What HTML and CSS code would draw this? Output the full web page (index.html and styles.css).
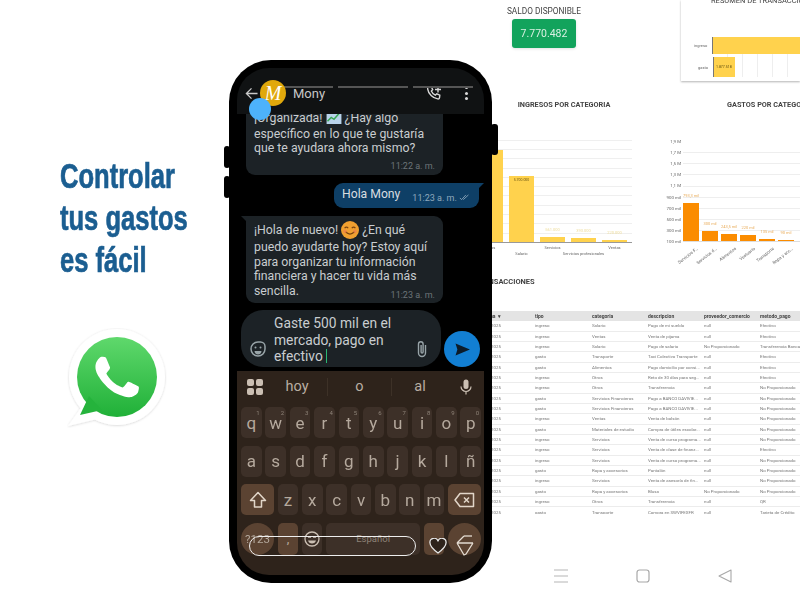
FILE: index.html
```html
<!DOCTYPE html>
<html lang="es">
<head>
<meta charset="utf-8">
<title>Controlar tus gastos</title>
<link rel="stylesheet" href="styles.css">
</head>
<body>
<main class="stage">
  <section class="pitch">
    <h1 class="headline">Controlar<br>tus gastos<br>es fácil</h1>
    <svg class="wa" viewBox="0 0 100 100" aria-label="WhatsApp">
      <defs>
        <linearGradient id="wag" x1="0" y1="0" x2="0" y2="1"><stop offset="0" stop-color="#5fd86c"/><stop offset="1" stop-color="#20b038"/></linearGradient>
        <filter id="was" x="-10%" y="-10%" width="120%" height="120%"><feDropShadow dx="0" dy="0.5" stdDeviation="1" flood-color="#000" flood-opacity=".18"/></filter>
      </defs>
      <g filter="url(#was)"><circle cx="50" cy="49" r="48" fill="#fff"/><path d="M18 74 L1 98 L30 91 Z" fill="#fff"/></g>
      <circle cx="50" cy="49" r="40" fill="url(#wag)"/>
      <path d="M22 68 L13 87 L35 82 Z" fill="#25b33c"/>
      <path transform="translate(6.8 5.8) scale(3.6)" fill="#fff" d="M17.472 14.382c-.297-.149-1.758-.867-2.03-.967-.273-.099-.471-.148-.67.15-.197.297-.767.966-.94 1.164-.173.199-.347.223-.644.075-.297-.15-1.255-.463-2.39-1.475-.883-.788-1.48-1.761-1.653-2.059-.173-.297-.018-.458.13-.606.134-.133.298-.347.446-.52.149-.174.198-.298.298-.497.099-.198.05-.371-.025-.52-.075-.149-.669-1.612-.916-2.207-.242-.579-.487-.5-.669-.51-.173-.008-.371-.01-.57-.01-.198 0-.52.074-.792.372-.272.297-1.04 1.016-1.04 2.479 0 1.462 1.065 2.875 1.213 3.074.149.198 2.096 3.2 5.077 4.487.709.306 1.262.489 1.694.625.712.227 1.36.195 1.871.118.571-.085 1.758-.719 2.006-1.413.248-.694.248-1.289.173-1.413-.074-.124-.272-.198-.57-.347z"/>
    </svg>
  </section>

  <section class="dash">
    <div class="dash-top">
      <div class="saldo">
        <div class="saldo-title">SALDO DISPONIBLE</div>
        <div class="saldo-box">7.770.482</div>
      </div>
      <div class="resumen">
        <div class="resumen-title">RESUMEN DE TRANSACCIONES</div>
        <div class="hbars">
          <div class="hrow"><span class="hlabel">ingreso</span><span class="hbar hbar-in"></span></div>
          <div class="hrow"><span class="hlabel">gasto</span><span class="hbar hbar-out">1.877.518</span></div>
        </div>
      </div>
    </div>

    <div class="dash-charts">
      <div class="chart chart-in">
        <h2 class="chart-title">INGRESOS POR CATEGORIA</h2>
        <div class="plot plot-in">
          <div class="col"><span class="bar bar-y" style="height:92px"></span></div>
          <div class="col"><span class="bar bar-y" style="height:66px"><span class="inlabel">5.700.000</span></span></div>
          <div class="col"><span class="val">561.000</span><span class="bar bar-y" style="height:5px"></span></div>
          <div class="col"><span class="val">393.000</span><span class="bar bar-y" style="height:4px"></span></div>
          <div class="col"><span class="val">220.000</span><span class="bar bar-y" style="height:2px"></span></div>
        </div>
        <div class="xlabels">
          <span class="xl">Otros</span><span class="xl low">Salario</span><span class="xl">Servicios</span><span class="xl low">Servicios profesionales</span><span class="xl">Ventas</span>
        </div>
      </div>
      <div class="chart chart-out">
        <h2 class="chart-title">GASTOS POR CATEGORIA</h2>
        <div class="plot-wrap">
          <div class="yaxis"><span>1,9 M</span><span>1,7 M</span><span>1,5 M</span><span>1,3 M</span><span>1,1 M</span><span>900 mil</span><span>700 mil</span><span>500 mil</span><span>300 mil</span><span>100 mil</span></div>
          <div class="plot plot-out">
            <div class="col"><span class="val val-o">793,3 mil</span><span class="bar bar-o" style="height:38px"></span></div>
            <div class="col"><span class="val val-o">300 mil</span><span class="bar bar-o" style="height:10px"></span></div>
            <div class="col"><span class="val val-o">243,5 mil</span><span class="bar bar-o" style="height:7px"></span></div>
            <div class="col"><span class="val val-o">220 mil</span><span class="bar bar-o" style="height:6px"></span></div>
            <div class="col"><span class="val val-o">135 mil</span><span class="bar bar-o" style="height:2px"></span></div>
            <div class="col"><span class="val val-o">90 mil</span><span class="bar bar-o" style="height:1px"></span></div>
          </div>
        </div>
        <div class="rlabels"><span>Servicios F...</span><span>Servicios d...</span><span>Alimentos</span><span>Vestuario</span><span>Transporte</span><span>Ropa y acc...</span><span>Salud</span></div>
      </div>
    </div>

    <h2 class="table-title">TRANSACCIONES</h2>
    <div class="table">
      <div class="row head"><span>fecha &nbsp;▾</span><span>tipo</span><span>categoria</span><span>descripcion</span><span>proveedor_comercio</span><span>metodo_pago</span></div>
      <div class="row"><span>01/01/2025</span><span>ingreso</span><span>Salario</span><span>Pago de mi sueldo</span><span>null</span><span>Efectivo</span></div>
      <div class="row"><span>02/01/2025</span><span>ingreso</span><span>Ventas</span><span>Venta de pijama</span><span>null</span><span>Efectivo</span></div>
      <div class="row"><span>03/01/2025</span><span>ingreso</span><span>Salario</span><span>Pago de salario</span><span>No Proporcionado</span><span>Transferencia Banca</span></div>
      <div class="row"><span>04/01/2025</span><span>gasto</span><span>Transporte</span><span>Taxi Colectivo Transporte</span><span>null</span><span>Efectivo</span></div>
      <div class="row"><span>05/01/2025</span><span>gasto</span><span>Alimentos</span><span>Pago domicilio por consi...</span><span>null</span><span>Efectivo</span></div>
      <div class="row"><span>06/01/2025</span><span>ingreso</span><span>Otros</span><span>Reto de 30 días para seg...</span><span>null</span><span>Efectivo</span></div>
      <div class="row"><span>07/01/2025</span><span>ingreso</span><span>Otros</span><span>Transferencia</span><span>null</span><span>No Proporcionado</span></div>
      <div class="row"><span>08/01/2025</span><span>gasto</span><span>Servicios Financieros</span><span>Pago a BANCO DAVIVIE...</span><span>null</span><span>No Proporcionado</span></div>
      <div class="row"><span>09/01/2025</span><span>gasto</span><span>Servicios Financieros</span><span>Pago a BANCO DAVIVIE...</span><span>null</span><span>No Proporcionado</span></div>
      <div class="row"><span>10/01/2025</span><span>ingreso</span><span>Ventas</span><span>Venta de bolsón</span><span>null</span><span>No Proporcionado</span></div>
      <div class="row"><span>11/01/2025</span><span>gasto</span><span>Materiales de estudio</span><span>Compra de útiles escolar...</span><span>null</span><span>No Proporcionado</span></div>
      <div class="row"><span>12/01/2025</span><span>ingreso</span><span>Servicios</span><span>Venta de curso programa...</span><span>null</span><span>No Proporcionado</span></div>
      <div class="row"><span>13/01/2025</span><span>ingreso</span><span>Servicios</span><span>Venta de clase de finanz...</span><span>null</span><span>Efectivo</span></div>
      <div class="row"><span>14/01/2025</span><span>ingreso</span><span>Servicios</span><span>Venta de curso programa...</span><span>null</span><span>No Proporcionado</span></div>
      <div class="row"><span>15/01/2025</span><span>gasto</span><span>Ropa y accesorios</span><span>Pantalón</span><span>null</span><span>No Proporcionado</span></div>
      <div class="row"><span>16/01/2025</span><span>ingreso</span><span>Servicios</span><span>Venta de asesoría de fin...</span><span>null</span><span>No Proporcionado</span></div>
      <div class="row"><span>17/01/2025</span><span>gasto</span><span>Ropa y accesorios</span><span>Blusa</span><span>No Proporcionado</span><span>No Proporcionado</span></div>
      <div class="row"><span>18/01/2025</span><span>ingreso</span><span>Otros</span><span>Transferencia</span><span>null</span><span>QR</span></div>
      <div class="row"><span>19/01/2025</span><span>gasto</span><span>Transporte</span><span>Compra en SWVIFEXFR</span><span>null</span><span>Tarjeta de Crédito</span></div>
    </div>

    <nav class="androidnav">
      <svg class="navicon" viewBox="0 0 14 14"><path d="M0 1h14M0 7h14M0 13h14" fill="none" stroke="#b5b5b5" stroke-width="1"/></svg>
      <svg class="navicon" viewBox="0 0 14 14"><rect x="1" y="1" width="12" height="12" rx="2.5" fill="none" stroke="#a8a8a8" stroke-width="1.2"/></svg>
      <svg class="navicon" viewBox="0 0 14 14"><path d="M13 1v12L1 7z" fill="none" stroke="#a8a8a8" stroke-width="1.1" stroke-linejoin="round"/></svg>
    </nav>
  </section>

  <section class="phone">
    <span class="sidekey sidekey-l1"></span>
    <span class="sidekey sidekey-l2"></span>
    <span class="sidekey sidekey-r"></span>
    <div class="screen">
      <header class="wa-head">
        <svg class="ic-back" viewBox="0 0 14 14"><path d="M13.5 7H1.5M7 1.5L1.5 7 7 12.5" fill="none" stroke="#c9c9c9" stroke-width="1.4"/></svg>
        <span class="avatar">M</span>
        <span class="contact">Mony</span>
        <svg class="ic-call" viewBox="0 0 16 16"><path d="M3 1.500l2.300-.3 1.400 3-1.400 1.400c.8 1.900 2.200 3.300 4 4.100l1.500-1.400 3 1.400-.3 2.600c-.2.9-1 1.200-1.800 1.100C6.700 12.800 2.500 8.500 1.600 3.300 1.500 2.400 2 1.700 3 1.500z" fill="none" stroke="#d8d8d8" stroke-width="1.400"/><path d="M12 1v6M9 4h6" stroke="#d8d8d8" stroke-width="1.400"/></svg>
        <span class="dots"><i></i><i></i><i></i></span>
      </header>
      <div class="chat">
        <div class="bubble bubble-in">
          <p class="msg">¡Organizada! <svg class="emoji-chart" viewBox="0 0 16 14"><rect width="16" height="14" fill="#b9d3ea"/><path d="M1 11l4-4 3 2 6-7" fill="none" stroke="#3aa655" stroke-width="1.600"/></svg> ¿Hay algo específico en lo que te gustaría que te ayudara ahora mismo?</p>
          <div class="stamp">11:22 a. m.</div>
        </div>
        <div class="bubble-out"><span class="out-text">Hola Mony</span><span class="stamp-out">11:23 a. m. <svg class="ticks" viewBox="0 0 14 8"><path d="M1 4.500l2 2L8 1M5 6.500L11 1" fill="none" stroke="#8fa9bd" stroke-width="1"/></svg></span></div>
        <div class="bubble bubble-in bubble-tail">
          <p class="msg">¡Hola de nuevo! <svg class="emoji" viewBox="0 0 20 20"><circle cx="10" cy="10" r="10" fill="#f0a030"/><path d="M4 8q2-2.500 4 0M12 8q2-2.500 4 0" fill="none" stroke="#7a4410" stroke-width="1.300"/><path d="M5 12q5 5 10 0" fill="none" stroke="#7a4410" stroke-width="1.400"/><circle cx="4.500" cy="11.500" r="2" fill="#ef7a50" opacity=".6"/><circle cx="15.500" cy="11.500" r="2" fill="#ef7a50" opacity=".6"/></svg> ¿En qué puedo ayudarte hoy? Estoy aquí para organizar tu información financiera y hacer tu vida más sencilla.</p>
          <div class="stamp stamp-tight">11:23 a. m.</div>
        </div>
        <div class="composer-row">
          <div class="composer">
            <svg class="ic-sticker" viewBox="0 0 16 16"><path d="M8 1h2.500C13 1 15 3 15 5.500V8c0 3.900-3.100 7-7 7s-7-3.100-7-7 3.100-7 7-7z" fill="none" stroke="#98a4a8" stroke-width="1.500"/><circle cx="5.500" cy="6.500" r="1" fill="#98a4a8"/><circle cx="10.500" cy="6.500" r="1" fill="#98a4a8"/><path d="M4.500 10h7c0 2-1.500 3.500-3.500 3.500S4.500 12 4.500 10z" fill="#98a4a8"/></svg>
            <div class="typed">Gaste 500 mil en el mercado, pago en efectivo <span class="caret"></span></div>
            <svg class="ic-clip" viewBox="0 0 12 18"><path d="M9.500 5v8a3.500 3.500 0 0 1-7 0V4a2.300 2.300 0 0 1 4.600 0v8a1 1 0 0 1-2 0V5" fill="none" stroke="#98a4a8" stroke-width="1.400"/></svg>
          </div>
          <button class="send" type="button" aria-label="Enviar"><svg class="ic-send" viewBox="0 0 16 14"><path d="M0.500 0.500L16 7 .500 13.500 2.500 7z" fill="#0c1c2a"/></svg></button>
        </div>
      </div>
      <div class="keyboard">
        <div class="suggest">
          <span class="grid4"><i></i><i></i><i></i><i></i></span>
          <span class="sug">hoy</span>
          <span class="sug">o</span>
          <span class="sug sug-c">al</span>
          <svg class="ic-mic" viewBox="0 0 12 16"><rect x="3.500" y="0.500" width="5" height="9.500" rx="2.500" fill="#cbbfb3"/><path d="M1 7.500a5 5 0 0 0 10 0M6 12.500v3" fill="none" stroke="#cbbfb3" stroke-width="1.200"/></svg>
        </div>
        <div class="keyrow">
          <span class="key"><sup>1</sup>q</span><span class="key"><sup>2</sup>w</span><span class="key"><sup>3</sup>e</span><span class="key"><sup>4</sup>r</span><span class="key"><sup>5</sup>t</span><span class="key"><sup>6</sup>y</span><span class="key"><sup>7</sup>u</span><span class="key"><sup>8</sup>i</span><span class="key"><sup>9</sup>o</span><span class="key"><sup>0</sup>p</span>
        </div>
        <div class="keyrow">
          <span class="key">a</span><span class="key">s</span><span class="key">d</span><span class="key">f</span><span class="key">g</span><span class="key">h</span><span class="key">j</span><span class="key">k</span><span class="key">l</span><span class="key">ñ</span>
        </div>
        <div class="keyrow">
          <span class="key key-fn key-wide"><svg class="ic-shift" viewBox="0 0 18 18"><path d="M9 1.500L1.500 9.500H5.500V16H12.500V9.500H16.500z" fill="none" stroke="#e2d6c9" stroke-width="1.500" stroke-linejoin="round"/></svg></span>
          <span class="key">z</span><span class="key">x</span><span class="key">c</span><span class="key">v</span><span class="key">b</span><span class="key">n</span><span class="key">m</span>
          <span class="key key-fn key-wide"><svg class="ic-del" viewBox="0 0 21 16"><path d="M6 1.500H19.500V14.500H6L1 8z" fill="none" stroke="#e2d6c9" stroke-width="1.500" stroke-linejoin="round"/><path d="M10 5.500l5 5M15 5.500l-5 5" stroke="#e2d6c9" stroke-width="1.500"/></svg></span>
        </div>
        <div class="keyrow">
          <span class="key key-fn key-wide key-round key-num">?123</span>
          <span class="key key-fn key-comma">,</span>
          <span class="key"><svg class="ic-smile" viewBox="0 0 16 16"><circle cx="8" cy="8" r="7" fill="none" stroke="#cbbfb3" stroke-width="1.300"/><path d="M4 6h3M9 6h3" stroke="#cbbfb3" stroke-width="1.300"/><path d="M4 9.500h8c-.5 2-2 3-4 3s-3.500-1-4-3z" fill="#cbbfb3"/></svg></span>
          <span class="key key-space">Español</span>
          <span class="key key-fn"></span>
          <span class="key key-fn key-wide key-round"></span>
        </div>
      </div>
      <span class="home-pill"></span>
      <svg class="ic-heart" viewBox="0 0 18 16"><path d="M9 15C3 10.500 1 8 1 5a4 4 0 0 1 8-1.500A4 4 0 0 1 17 5c0 3-2 5.500-8 10z" fill="#2e231b" stroke="#e6e6e6" stroke-width="1.300"/></svg>
      <svg class="ic-funnel" viewBox="0 0 20 22"><path d="M2 9L9 2M2 9h16M2 9l7 12 2-1 7-11" fill="none" stroke="#e4dcd2" stroke-width="1.300"/><path d="M9 2h8" stroke="#e4dcd2" stroke-width="1.300"/></svg>
    </div>
    <span class="blue-dot"></span>
  </section>
</main>
</body>
</html>
```

FILE: styles.css
```css
* { box-sizing: border-box; }
html, body { margin: 0; padding: 0; background: #fff; }
body { font-family: Roboto, "Liberation Sans", sans-serif; }
.stage { position: relative; width: 800px; height: 600px; overflow: hidden; background: #fff; }

/* left pitch */
.pitch { position: absolute; left: 60px; top: 155px; display: flex; flex-direction: column; gap: 47px; }
.headline { align-self: flex-start; margin: 0; font-family: "Liberation Sans", sans-serif; font-weight: 700; font-size: 35px; line-height: 42px; color: #1b5e91; -webkit-text-stroke: .7px #1b5e91; white-space: nowrap; transform: scaleX(.73); transform-origin: left center; }
.wa { width: 100px; height: 100px; margin-left: 7px; }

/* dashboard */
.dash { position: absolute; left: 470px; top: 0; width: 330px; height: 600px; overflow: hidden; display: flex; flex-direction: column; color: #555; filter: blur(.35px); }
.dash-top { display: grid; grid-template-columns: 211px 119px; height: 100px; }
.saldo { width: 148px; display: flex; flex-direction: column; align-items: center; padding-top: 6px; }
.saldo-title { font-size: 8.300px; line-height: 11px; color: #444; }
.saldo-box { width: 64px; height: 29px; margin-top: 2px; background: #12a35c; border-radius: 3px; color: #d9f0e2; font-size: 10.500px; line-height: 29px; text-align: center; box-shadow: 0 1px 3px rgba(0,0,0,.12); }
.resumen { height: 81px; background: #fff; box-shadow: 0 1px 2px rgba(0,0,0,.3); position: relative; overflow: hidden; }
.resumen-title { font-size: 7.500px; line-height: 8px; padding-left: 30px; margin-top: -3px; white-space: nowrap; color: #444; }
.hbars { margin-top: 32px; display: flex; flex-direction: column; gap: 3px; background: repeating-linear-gradient(90deg, transparent 0 14px, #eee 14px 15px) 32px 0 no-repeat; }
.hrow { display: flex; align-items: center; }
.hlabel { width: 32px; padding-right: 5px; font-size: 4px; text-align: right; color: #666; }
.hbar { display: block; height: 17px; background: #ffd24d; border-left: 1px solid #777; font-size: 3.500px; line-height: 17px; padding-left: 2px; color: #5a4a10; }
.hbar-in { width: 90px; }
.hbar-out { width: 22px; height: 20px; line-height: 20px; }

.dash-charts { display: grid; grid-template-columns: 188px 142px; height: 170px; }
.chart { min-width: 0; overflow: hidden; }
.chart-title { margin: 0; font-size: 7.300px; line-height: 10px; font-weight: 700; color: #444; white-space: nowrap; }
.chart-in .chart-title { text-align: center; }
.chart-out .chart-title { padding-left: 69px; }
.plot { display: flex; align-items: flex-end; }
.plot-in { width: 162px; height: 112px; margin-top: 21px; padding-left: 8px; gap: 6px; border-bottom: 1px solid #999; background: repeating-linear-gradient(0deg, #fff 0 8.300px, #efefef 8.300px 9.300px); }
.col { width: 25px; display: flex; flex-direction: column; align-items: center; justify-content: flex-end; flex: none; }
.bar { display: block; width: 100%; }
.bar-y { background: #ffd24d; }
.bar-o { background: #fb8c00; }
.inlabel { display: block; font-size: 3.500px; line-height: 8px; text-align: center; color: #6a5612; }
.val { display: block; font-size: 4px; line-height: 9px; color: #eddc9b; white-space: nowrap; padding-bottom: 3px; }
.val-o { color: #e9ad5c; }
.xlabels { display: flex; gap: 6px; padding-left: 8px; padding-top: 2px; }
.xl { width: 25px; flex: none; font-size: 4px; line-height: 6px; color: #666; white-space: nowrap; display: flex; justify-content: center; }
.xl.low { padding-top: 6px; }

.plot-wrap { display: flex; margin-top: 32px; }
.yaxis { width: 25px; height: 105px; margin-top: -3px; display: flex; flex-direction: column; justify-content: space-between; text-align: right; font-size: 4.400px; color: #666; padding-right: 2px; }
.yaxis span { line-height: 5px; }
.plot-out { width: 117px; height: 100px; gap: 3px; border-bottom: 1px solid #ddd; background: repeating-linear-gradient(0deg, #fff 0 10.100px, #eee 10.100px 11.100px); }
.plot-out .col { width: 16px; }
.rlabels { display: flex; gap: 3px; padding-left: 25px; height: 20px; }
.rlabels span { width: 16px; flex: none; font-size: 4.400px; line-height: 5px; white-space: nowrap; color: #666; display: flex; justify-content: flex-end; transform: translate(-3px, 2px) rotate(-38deg); transform-origin: right top; }

.table-title { margin: 7px 0 0; padding-left: 4px; font-size: 7.500px; line-height: 10px; font-weight: 700; color: #444; }
.table { height: 203px; margin-top: 24px; margin-bottom: 1px; overflow: hidden; }
.row { display: grid; grid-template-columns: 65px 57px 56px 56px 56px 60px; height: 10.350px; align-items: center; border-bottom: 1px solid #ececec; font-size: 4.400px; color: #777; white-space: nowrap; }
.row span { overflow: hidden; }
.head { height: 9.500px; background: #e4e4e4; border-bottom: 0; font-weight: 700; font-size: 5px; color: #444; }
.head + .row { height: 11px; }
.row span:first-child { text-align: right; width: 31px; }
.androidnav { display: flex; gap: 68px; margin-top: 54px; padding-left: 84px; }
.navicon { width: 14px; height: 14px; flex: none; }

/* phone */
.phone { position: absolute; left: 229px; top: 60px; width: 263px; height: 523px; background: #000; border-radius: 42px; padding: 8px; }
.sidekey { position: absolute; background: #000; border-radius: 3px; }
.sidekey-l1 { left: -5px; top: 86px; width: 6px; height: 22px; }
.sidekey-l2 { left: -5px; top: 116px; width: 6px; height: 22px; }
.sidekey-r { right: -6px; top: 64px; width: 7px; height: 31px; }
.screen { position: relative; width: 247px; height: 507px; border-radius: 32px; overflow: hidden; display: flex; flex-direction: column; background: #000; filter: blur(.3px); }
.wa-head { position: relative; height: 46px; flex: none; background: #101213; display: flex; align-items: center; padding: 4px 8px 0 8px; z-index: 1; }
.wa-head::before { content: ""; position: absolute; left: 26px; right: 11px; top: 18px; height: 2px; background: repeating-linear-gradient(90deg, #555 0 70px, transparent 70px 75px); }
.ic-back { width: 13px; height: 13px; flex: none; }
.avatar { width: 26px; height: 26px; margin-left: 2px; flex: none; border-radius: 50%; background: #e0a80c; color: #fff; font: italic 400 20px/26px "Liberation Serif", serif; text-align: center; position: relative; }
.contact { margin-left: 7px; font-size: 13px; color: #c7c7c7; flex: 1; }
.ic-call { width: 16px; height: 17px; flex: none; }
.dots { display: flex; flex-direction: column; gap: 2.500px; margin: 0 8px 0 23px; }
.dots i { display: block; width: 3px; height: 3px; border-radius: 50%; background: #d8d8d8; }

.chat { flex: 1; min-height: 0; overflow: hidden; display: flex; flex-direction: column; justify-content: flex-end; padding: 0 3px 4px 4px; gap: 8px; background: #000; }
.bubble { width: 197px; margin-left: 5px; background: #1c2226; border-radius: 9px; padding: 7px 8px 3px; flex: none; position: relative; }
.bubble-tail { border-top-left-radius: 0; padding: 5px 8px 2px; }
.bubble-tail::before { content: ""; position: absolute; left: -5px; top: 0; border-top: 6px solid #1c2226; border-left: 6px solid transparent; }
.msg { margin: 0; font-size: 12.300px; line-height: 14.500px; color: #c9cdd0; }
.emoji-chart { width: 16px; height: 13px; margin-bottom: 3px; vertical-align: -5px; }
.emoji { width: 18px; height: 18px; margin-bottom: 1.500px; vertical-align: -6.250px; }
.stamp { font-size: 9px; line-height: 12px; color: #6c7478; text-align: right; margin-top: 4px; }
.stamp-tight { margin-top: -9px; }
.bubble-out { flex: none; align-self: flex-end; position: relative; width: 145px; height: 25px; margin-right: 2px; background: #0e3f66; border-radius: 9px 0 9px 9px; display: flex; align-items: center; justify-content: space-between; padding: 0 8px; }
.bubble-out::after { content: ""; position: absolute; right: -5px; top: 0; border-top: 6px solid #0e3f66; border-right: 6px solid transparent; }
.out-text { font-size: 12.200px; color: #d8dde0; margin-top: -2px; }
.stamp-out { font-size: 9px; color: #8fa9bd; padding-top: 5px; white-space: nowrap; }
.ticks { width: 12px; height: 7px; }
.composer-row { display: flex; align-items: flex-end; gap: 3px; flex: none; margin-top: -1px; }
.composer { width: 200px; height: 57px; border-radius: 22px; background: #1c2226; display: flex; align-items: center; padding: 0 13px 0 9px; }
.ic-sticker { width: 16px; height: 16px; flex: none; align-self: flex-end; margin-bottom: 10px; }
.typed { flex: 1; margin-left: 8px; padding-top: 3px; font-size: 13.800px; line-height: 16.700px; color: #c9cdd0; }
.caret { display: inline-block; width: 1px; height: 14px; background: #2bb673; vertical-align: -2px; }
.ic-clip { width: 12px; height: 18px; flex: none; align-self: flex-end; margin-bottom: 9px; }
.send { width: 36px; height: 36px; padding: 0; border: 0; border-radius: 50%; background: #127fd3; display: flex; align-items: center; justify-content: center; flex: none; }
.ic-send { width: 15px; height: 13px; }

.keyboard { height: 204px; flex: none; background: #2e231b; padding: 3px 3px 0 4px; display: flex; flex-direction: column; gap: 7.500px; }
.suggest { height: 25.500px; display: grid; grid-template-columns: 20px 61px 64px 56px 1fr; align-items: center; padding-left: 6px; color: #b9aea3; font-size: 14.500px; flex: none; }
.grid4 { display: grid; grid-template-columns: 7px 7px; gap: 1.500px; width: 16px; }
.grid4 i { display: block; height: 7px; background: #cbbfb3; border-radius: 2px; }
.sug { text-align: center; border-right: 1px solid #3d3127; line-height: 18px; }
.sug-c { border-right: 0; }
.ic-mic { width: 12px; height: 16px; justify-self: end; margin-right: 9px; }
.keyrow { display: flex; gap: 3.700px; height: 31px; flex: none; }
.key { position: relative; flex: 1 1 0; min-width: 0; border-radius: 5px; background: #3d3028; color: #b5a99d; font-size: 17px; display: flex; align-items: center; justify-content: center; }
.key sup { position: absolute; top: 2px; right: 2px; font-size: 6px; line-height: 7px; color: #8d8277; }
.key-fn { background: #5b4332; }
.key-wide { flex: 0 0 33px; }
.key-round { border-radius: 50%; height: 32px; }
.key-num { font-size: 11.500px; color: #b5a99d; }
.key-comma { font-size: 13px; }
.key-space { font-size: 9.500px; color: #8d8277; }
.keyrow:last-child { height: 32px; }
.keyrow:last-child .key { flex: 0 0 20.500px; }
.keyrow:last-child .key-wide { flex: 0 0 33px; }
.keyrow:last-child .key-space { flex: 0 0 94px; }
.ic-shift { width: 18px; height: 18px; }
.ic-del { width: 21px; height: 16px; }
.ic-smile { width: 16px; height: 16px; }
.home-pill { position: absolute; left: 12px; top: 468px; width: 167px; height: 20px; border: 1.500px solid #eee; border-radius: 10px; }
.ic-heart { position: absolute; left: 192px; top: 470px; width: 18px; height: 16px; }
.ic-funnel { position: absolute; left: 218px; top: 466px; width: 20px; height: 22px; }
.blue-dot { position: absolute; left: 20px; top: 38px; width: 22px; height: 22px; border-radius: 50%; background: #4db2fb; }
```
